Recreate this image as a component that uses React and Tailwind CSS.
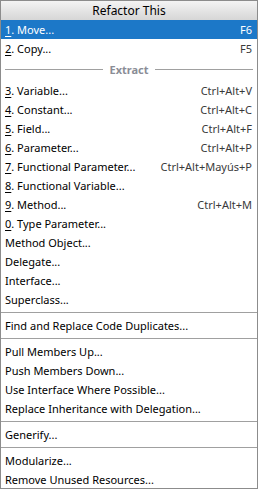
import React from "react";

const Row = ({ mn, label, sc, active }) => (
  <div
    className={`flex h-[19px] items-center justify-between pl-[4px] pr-[5px] ${
      active ? "bg-[#1c78c8] text-white" : "text-black"
    }`}
  >
    <span className="whitespace-nowrap">
      {mn !== undefined && <span className="underline underline-offset-2">{mn}</span>}
      {label}
    </span>
    {sc && (
      <span className={`whitespace-nowrap ${active ? "text-white" : "text-[#3a3a3a]"}`}>{sc}</span>
    )}
  </div>
);

const Sep = () => (
  <div className="flex h-[7px] items-center">
    <div className="h-px w-full bg-[#a0a0a0]" />
  </div>
);

export default function App() {
  return (
    <div
      className="w-[258px] h-[489px] overflow-hidden border border-[#8c8c8c] bg-white text-[11px] leading-none"
      style={{ fontFamily: '"Noto Sans", "Open Sans", sans-serif' }}
    >
      <div className="flex h-[19px] items-center justify-center bg-gradient-to-b from-[#f4f4f4] to-[#d6d6d6] text-[12px] text-black">
        Refactor This
      </div>
      <Row mn="1" label=". Move..." sc="F6" active />
      <Row mn="2" label=". Copy..." sc="F5" />
      <div className="flex h-[23px] items-center gap-[6px] px-[4px]">
        <div className="h-px flex-1 bg-[#a0a0a0]" />
        <span className="font-bold text-[#8a8d96]">Extract</span>
        <div className="h-px flex-1 bg-[#a0a0a0]" />
      </div>
      <Row mn="3" label=". Variable..." sc="Ctrl+Alt+V" />
      <Row mn="4" label=". Constant..." sc="Ctrl+Alt+C" />
      <Row mn="5" label=". Field..." sc="Ctrl+Alt+F" />
      <Row mn="6" label=". Parameter..." sc="Ctrl+Alt+P" />
      <Row mn="7" label=". Functional Parameter..." sc="Ctrl+Alt+Mayús+P" />
      <Row mn="8" label=". Functional Variable..." />
      <Row mn="9" label=". Method..." sc="Ctrl+Alt+M" />
      <Row mn="0" label=". Type Parameter..." />
      <Row label="Method Object..." />
      <Row label="Delegate..." />
      <Row label="Interface..." />
      <Row label="Superclass..." />
      <Sep />
      <Row label="Find and Replace Code Duplicates..." />
      <Sep />
      <Row label="Pull Members Up..." />
      <Row label="Push Members Down..." />
      <Row label="Use Interface Where Possible..." />
      <Row label="Replace Inheritance with Delegation..." />
      <Sep />
      <Row label="Generify..." />
      <Sep />
      <Row label="Modularize..." />
      <Row label="Remove Unused Resources..." />
    </div>
  );
}
